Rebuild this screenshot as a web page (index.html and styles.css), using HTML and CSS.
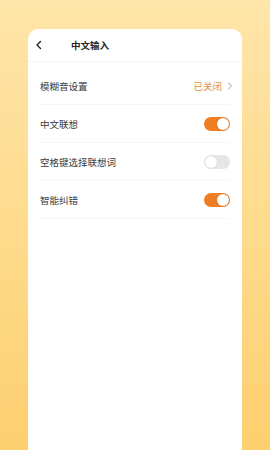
FILE: index.html
```html
<!DOCTYPE html>
<html lang="zh">
<head>
    <meta charset="UTF-8">
    <meta name="viewport" content="width=device-width, initial-scale=1.0">
    <title>中文输入</title>
    <link rel="stylesheet" href="styles.css">
</head>
<body>

    <div class="card">
        <!-- header -->
        <div class="header">
            <svg class="back" width="8" height="10" viewBox="0 0 8 10">
                <path d="M5.5 1.5 L2 5 L5.5 8.5" fill="none" stroke="#222" stroke-width="1.4" stroke-linecap="round" stroke-linejoin="round"/>
            </svg>
            <span class="title">中文输入</span>
        </div>

        <div class="list">
            <div class="row">
                <span class="label">模糊音设置</span>
                <span class="value">已关闭
                    <svg class="arrow" width="6" height="8" viewBox="0 0 6 8">
                        <path d="M1.5 1 L4.5 4 L1.5 7" fill="none" stroke="#999" stroke-width="1" stroke-linecap="round" stroke-linejoin="round"/>
                    </svg>
                </span>
            </div>
            <div class="row">
                <span class="label">中文联想</span>
                <span class="switch on"><span class="knob"></span></span>
            </div>
            <div class="row">
                <span class="label">空格键选择联想词</span>
                <span class="switch"><span class="knob"></span></span>
            </div>
            <div class="row">
                <span class="label">智能纠错</span>
                <span class="switch on"><span class="knob"></span></span>
            </div>
        </div>
    </div>

</body>
</html>
```
FILE: styles.css
```css
html, body {
    height: 100%;
}

body {
    margin: 0;
    font-family: "Noto Sans CJK SC", "Noto Sans", sans-serif;
    background: linear-gradient(180deg, #fee5a9 0%, #fedb8d 50%, #fdcf6f 100%);
    overflow: hidden;
}

.card {
    margin: 29px 28px 0;
    height: 440px;
    background-color: #fff;
    border-radius: 10px;
}

.header {
    height: 32px;
    display: flex;
    align-items: center;
    padding-left: 7px;
    border-bottom: 1px solid #f5f5f5;
}

.back {
    display: block;
}

.title {
    margin-left: 28px;
    font-size: 9.5px;
    font-weight: bold;
    color: #222;
}

.list {
    padding-top: 5px;
}

.row {
    height: 37px;
    margin: 0 12px;
    display: flex;
    align-items: center;
    justify-content: space-between;
    border-bottom: 1px solid #f7f7f7;
}

.label {
    font-size: 9.5px;
    color: #3a3a3a;
}

.value {
    display: flex;
    align-items: center;
    gap: 5px;
    margin-right: -3px;
    font-size: 9.5px;
    color: #e3913f;
}

.arrow {
    display: block;
}

.switch {
    position: relative;
    width: 26px;
    height: 14px;
    border-radius: 7px;
    background-color: #e6e6e6;
}

.switch.on {
    background-color: #ee7d24;
}

.knob {
    position: absolute;
    top: 1px;
    left: 1px;
    width: 12px;
    height: 12px;
    border-radius: 50%;
    background-color: #fff;
    box-shadow: 0 0 1px rgba(0, 0, 0, 0.25);
}

.switch.on .knob {
    left: 13px;
}
```
